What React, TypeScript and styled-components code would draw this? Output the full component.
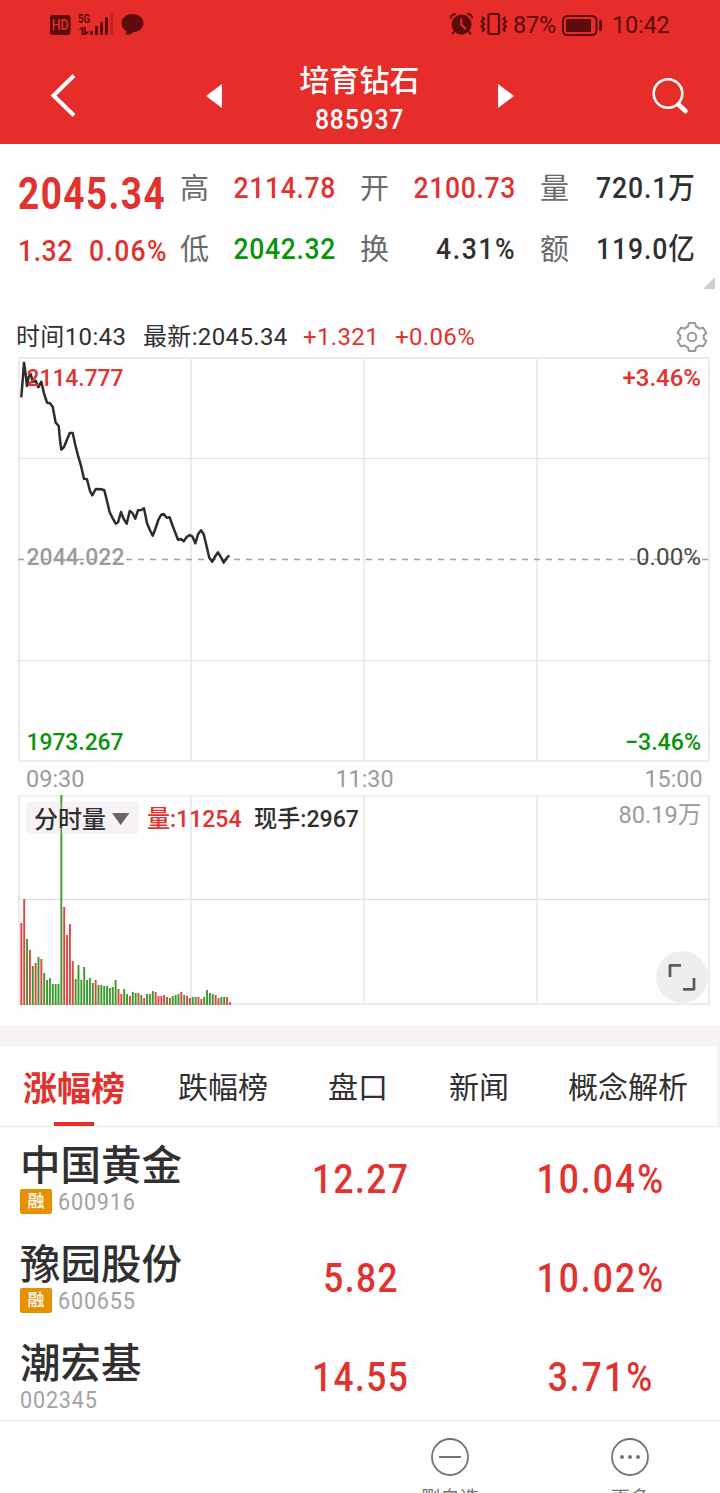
import React from "react";
import styled, { createGlobalStyle } from "styled-components";

const c = {
  brand: "#e72d2a",
  statusInk: "#5e0b0d",
  up: "#e03330",
  down: "#0a930c",
  ink: "#303030",
  label: "#6a6a6a",
  mute: "#9b9b9b",
  grid: "#ececec",
  band: "#f6f2f6",
  badge: "#e69100",
};

const GlobalStyle = createGlobalStyle`
  * { box-sizing: border-box; }
  body { margin: 0; background: #fefefe; overflow: hidden; }
`;

const Screen = styled.div`
  width: 720px;
  height: 1493px;
  overflow: hidden;
  display: flex;
  flex-direction: column;
  background: #fefefe;
  color: ${c.ink};
  font-family: Roboto, "Noto Sans CJK SC", sans-serif;
`;

/* Numerals are set slightly condensed with open tracking. */
const Num = styled.span<{
  $size: number;
  $weight?: number;
  $track?: number;
  $squeeze?: number;
  $origin?: string;
  $color?: string;
}>`
  display: inline-block;
  white-space: nowrap;
  font-size: ${(p) => p.$size}px;
  font-weight: ${(p) => p.$weight ?? 500};
  letter-spacing: ${(p) => p.$track ?? 0}px;
  color: ${(p) => p.$color ?? "inherit"};
  transform: scaleX(${(p) => p.$squeeze ?? 0.9});
  transform-origin: ${(p) => p.$origin ?? "left"} center;
  line-height: 1.2;
`;

const Header = styled.header`
  height: 144px;
  flex: none;
  background: ${c.brand};
  color: #fff;
`;

const StatusBar = styled.div`
  height: 48px;
  display: flex;
  justify-content: space-between;
  padding: 0 50px 0 49px;
  color: ${c.statusInk};
`;

const StatusGroup = styled.div`
  display: flex;
  align-items: center;
  height: 49px;
`;

const StatusText = styled.span<{ $width: number; $gap: number }>`
  width: ${(p) => p.$width}px;
  margin-left: ${(p) => p.$gap}px;
  font-size: 23.5px;
  letter-spacing: -0.2px;
  white-space: nowrap;
`;

const NavBar = styled.div`
  height: 96px;
  display: flex;
  align-items: center;
  justify-content: space-between;
  padding: 0 30px 0 50px;
`;

const BackIcon = styled.svg`
  margin-bottom: 3px;
`;

const Switcher = styled.div`
  display: flex;
  align-items: center;
  width: 308px;
  justify-content: space-between;
  margin-right: 7px;
`;

const Title = styled.div`
  display: flex;
  flex-direction: column;
  align-items: center;
  gap: 1px;
  height: 96px;
  padding-top: 12px;
`;

const TitleName = styled.h1`
  margin: 0;
  font-size: 30px;
  line-height: 42px;
  font-weight: 500;
`;

const Quote = styled.section`
  height: 176px;
  flex: none;
  display: grid;
  grid-template-columns: 162px 180px 180px 155px;
  grid-template-rows: 61px 61px;
  padding: 14px 0 0 18px;
  position: relative;
`;

const Cell = styled.div`
  display: flex;
  align-items: center;
  justify-content: space-between;
  width: 156px;
`;

const Latest = styled(Cell)<{ $shift?: number }>`
  justify-content: flex-start;
  padding-top: ${(p) => p.$shift ?? 0}px;
`;

const Change = styled.div<{ $width: number }>`
  width: ${(p) => p.$width}px;
`;

const CellLabel = styled.span`
  font-family: "Noto Sans CJK SC", sans-serif;
  font-size: 29px;
  line-height: 40px;
  margin-top: -5px;
  color: ${c.label};
`;

const Corner = styled.svg`
  position: absolute;
  right: 5px;
  top: 133px;
`;

const InfoRow = styled.div`
  height: 37px;
  flex: none;
  display: flex;
  align-items: center;
  padding: 0 0 4px 16px;
  font-size: 24px;
  line-height: 32px;
`;

const Info = styled.span<{ $width: number; $color?: string }>`
  width: ${(p) => p.$width}px;
  white-space: nowrap;
  letter-spacing: 0.35px;
  color: ${(p) => p.$color ?? c.ink};
`;

const GearSvg = styled.svg`
  margin-left: auto;
  margin-right: 12px;
`;

const ChartSvg = styled.svg`
  display: block;
  flex: none;
  font-family: Roboto, "Noto Sans CJK SC", sans-serif;
`;

const VolumeArea = styled.div`
  position: relative;
  height: 231px;
  flex: none;
`;

const ExpandButton = styled.button`
  position: absolute;
  left: 656px;
  top: 156px;
  width: 52px;
  height: 52px;
  border: 0;
  padding: 0;
  border-radius: 50%;
  background: #eeeeee;
`;

const Band = styled.div`
  height: 20px;
  flex: none;
  background: ${c.band};
`;

const Tabs = styled.nav`
  height: 81px;
  flex: none;
  display: flex;
  align-items: stretch;
  padding-left: 23px;
  border-right: 3px solid ${c.band};
  border-bottom: 1px solid #ebebeb;
`;

const Tab = styled.div<{ $active?: boolean; $width: number }>`
  width: ${(p) => p.$width}px;
  flex: none;
  position: relative;
  font-family: "Noto Sans CJK SC", sans-serif;
  font-size: ${(p) => (p.$active ? 34 : 30)}px;
  font-weight: ${(p) => (p.$active ? 700 : 400)};
  color: ${(p) => (p.$active ? c.up : c.ink)};
  line-height: ${(p) => (p.$active ? 81 : 79)}px;
  white-space: nowrap;
  &::after {
    content: "";
    display: ${(p) => (p.$active ? "block" : "none")};
    position: absolute;
    left: 31px;
    bottom: 0;
    width: 40px;
    height: 4px;
    background: ${c.brand};
  }
`;

const List = styled.div`
  height: 293px;
  flex: none;
  overflow: hidden;
`;

const Row = styled.div`
  height: 99px;
  display: grid;
  grid-template-columns: 241px 240px 239px;
`;

const Stock = styled.div`
  padding: 12px 0 0 20px;
`;

const StockName = styled.div`
  font-family: "Noto Sans CJK SC", sans-serif;
  font-size: 40.5px;
  font-weight: 500;
  line-height: 48px;
  height: 48px;
  white-space: nowrap;
`;

const StockMeta = styled.div`
  display: flex;
  align-items: center;
  gap: 6px;
  height: 26px;
  margin-top: 1px;
`;

const Badge = styled.span`
  width: 32px;
  height: 25px;
  border-radius: 2px;
  background: ${c.badge};
  color: #fff;
  font-size: 17px;
  font-weight: 500;
  line-height: 25px;
  text-align: center;
`;

const Code = styled(Num)`
  line-height: 24px;
  padding-top: 2px;
`;

const Figure = styled.div`
  display: flex;
  justify-content: center;
  align-items: center;
  height: 105px;
`;

const BottomBar = styled.footer`
  height: 73px;
  flex: none;
  display: flex;
  justify-content: flex-end;
  border-top: 1px solid #e9e9e9;
  overflow: hidden;
`;

const Action = styled.div`
  width: 180px;
  height: 90px;
  flex: none;
  display: flex;
  flex-direction: column;
  align-items: center;
  padding-top: 16px;
  color: #737373;
  font-family: "Noto Sans CJK SC", sans-serif;
  font-size: 19.5px;
  line-height: 28px;
  white-space: nowrap;
`;

const ActionIcon = styled.svg`
  flex: none;
`;

const ActionLabel = styled.span`
  flex: none;
  margin-top: 6px;
`;

const StatusIconsLeft = () => (
  <svg width="100" height="30" viewBox="49 10 100 30" fill={c.statusInk}>
    <rect x="50" y="15" width="20.500" height="20" rx="3" />
    <text x="51.700" y="30.300" fontSize="14" fontWeight="500" fill={c.brand} textLength="17" lengthAdjust="spacingAndGlyphs">HD</text>
    <text x="78" y="22.500" fontSize="13" fontWeight="700" textLength="12" lengthAdjust="spacingAndGlyphs">5G</text>
    <path d="M78 30.500 82 27h1.600v8H81.500v-5.500H78zM84.200 27h1.800v4.500h3.500L86 35h-1.800z" />
    <rect x="90" y="31" width="3" height="4" rx="1" />
    <rect x="95" y="26" width="3" height="9" rx="1" />
    <rect x="100" y="22" width="3" height="13" rx="1" />
    <rect x="105" y="17" width="3" height="18" rx="1" />
    <rect x="110.500" y="13" width="2.300" height="22" rx="1" opacity=".35" />
    <path d="M132.500 14c6.300 0 11 4 11 9s-4.500 9-10.500 9c-1 3-5 2.500-8.500 2.500 1.600-1 2-2 2-3.300-3-1.600-5-4.600-5-8.200 0-5 4.700-9 11-9z" />
  </svg>
);

const AlarmVibrate = () => (
  <svg width="60" height="30" viewBox="450 10 60 30" fill="none" stroke={c.statusInk}>
    <circle cx="462.500" cy="24.500" r="10" fill={c.statusInk} stroke="none" />
    <path d="M451.800 17.500q1-3 4.200-3.500M473.200 17.500q-1-3-4.200-3.500" strokeWidth="2.200" strokeLinecap="round" />
    <path d="m456 31-2.500 2.500M469 31l2.500 2.500" strokeWidth="2" strokeLinecap="round" />
    <path d="M462.300 18.500v6l4.500 4.500" stroke={c.brand} strokeWidth="2" />
    <rect x="489.500" y="14" width="10.500" height="20" rx="1.500" strokeWidth="2.200" />
    <path d="m483 17 2.200 2-2.700 2.500 2.700 2.500-2.700 2.500 2.700 2.500-2 2.500M506.500 17l-2.200 2 2.700 2.500-2.700 2.500 2.700 2.500-2.700 2.500 2 2.500" strokeWidth="2.200" />
  </svg>
);

const Battery = () => (
  <svg width="42" height="24" viewBox="562 12 42 24" fill="none" stroke={c.statusInk}>
    <rect x="564" y="15" width="33.500" height="19" rx="4.500" strokeWidth="2" />
    <rect x="567" y="18" width="25" height="13" rx="1" fill={c.statusInk} stroke="none" />
    <rect x="600.300" y="19" width="2.700" height="11" rx="1.300" fill={c.statusInk} stroke="none" />
  </svg>
);

const Gear = () => (
  <GearSvg width="32" height="32" viewBox="-16 -16 32 32" fill="none" stroke="#999" strokeWidth="2">
    <circle r="4.300" />
    <path
      strokeLinejoin="round"
      d="M-3-14H3L4.200-10.200Q6-9.500 7.300-8.400L11.200-9.200 14.300-4 11.600-1.500Q11.900 0 11.600 1.500L14.300 4 11.200 9.200 7.300 8.400Q6 9.500 4.200 10.200L3 14H-3L-4.200 10.200Q-6 9.500-7.300 8.400L-11.200 9.200-14.300 4-11.600 1.500Q-11.900 0-11.600-1.500L-14.300-4-11.200-9.200-7.300-8.400Q-6-9.500-4.200-10.200z"
    />
  </GearSvg>
);

/* Intraday price trace in chart coordinates. */
const price =
  "21.300,397.300 22.700,380 24,362.700 25.300,371.700 27,386 28.700,376.700 30.700,374 32.700,381.700 35.700,380.700 38.300,387.300 41.300,381.700 44,393.300 47,402.700 50,403.300 52.700,406.700 55.700,422.700 58.700,426 60,440 61.300,449.700 64,447 69.700,433 72.700,433 75.300,445 78.300,456.700 81,465.700 84,478.700 87,479.300 90,491 92.300,495.300 95.700,489 101.300,489.300 104.300,490.300 107,501 109.700,512.300 112.700,518.300 115.700,523.700 118,522.300 121,512 123.700,519 126.700,523.700 129.700,511 132.300,512.700 135.300,518.700 138,510.300 141.300,510 144,508.300 147,523.300 150,530.300 152.700,535.700 155.300,529 158.300,520 161,515 163.700,514 166.700,517.700 169.700,517.300 172.300,525 175.300,532.700 178,539.700 181,539 183.700,541.300 186.700,537 189.700,535 192.300,536.300 195.300,543.300 198,534.300 201,530.300 203.700,534.300 206.700,546.700 209.300,557.700 212.300,561.700 215,556.700 218,552.300 221,557.300 223.700,562.700 226.700,558 229.300,555.300";

/* Volume per minute: direction and bar height. */
const volume =
  "r82 r106 g66 r55 g39 r42 g48 r46 g32 g25 g27 g21 g21 g21 g211 r98 r70 r81 r44 g26 g40 g25 g38 g25 g27 g22 r25 g20 g20 g19 g19 g17 g18 g25 r16 r11 g16 g11 r9 g13 g12 r12 g10 r7 g11 g11 g14 r13 r9 r9 r10 g8 r7 g9 g10 g11 r13 g10 r9 r7 g8 g8 r8 r6 g8 g15 g12 g11 r10 r7 g8 g8 r8 r3"
    .split(" ")
    .map((v) => ({ up: v[0] === "r", h: Number(v.slice(1)) }));

type LabelProps = { x: number; y: number; w: number; fill: string; size?: number; weight?: number; children: string };
const Label = ({ x, y, w, fill, size = 24, weight = 500, children }: LabelProps) => (
  <text x={x} y={y} fontSize={size} fontWeight={weight} fill={fill} textLength={w} lengthAdjust="spacingAndGlyphs">
    {children}
  </text>
);

const PriceChart = () => (
  <ChartSvg width="720" height="438" viewBox="0 357 720 438">
    <g stroke={c.grid} strokeWidth="2">
      <path d="M18 358H710M18 761H710M19 358V761M191 358V761M364 358V761M537 358V761M709 358V761" />
      <path d="M18 458.500H710M18 660.500H710" strokeWidth="1" stroke="#e2e2e2" />
    </g>
    <path d="M18 559.500H710" stroke="#a2a2a2" strokeWidth="1.500" strokeDasharray="6 6" />
    <polyline points={price} fill="none" stroke="#2c2c2c" strokeWidth="2.500" strokeLinejoin="round" />
    <Label x={26.5} y={386} w={97} fill={c.up}>2114.777</Label>
    <Label x={622.5} y={386} w={78.5} fill={c.up}>+3.46%</Label>
    <Label x={26.5} y={565} w={98} fill={c.mute}>2044.022</Label>
    <Label x={636} y={565} w={65} fill="#4a4a4a" weight={400}>0.00%</Label>
    <Label x={26.5} y={750} w={97} fill={c.down}>1973.267</Label>
    <Label x={625} y={750} w={76} fill={c.down}>−3.46%</Label>
    <Label x={26} y={787} w={58.5} fill={c.mute} weight={400}>09:30</Label>
    <Label x={335.5} y={787} w={58} fill={c.mute} weight={400}>11:30</Label>
    <Label x={644.5} y={787} w={58} fill={c.mute} weight={400}>15:00</Label>
  </ChartSvg>
);

const VolumeChart = () => (
  <VolumeArea>
    <ChartSvg width="720" height="231" viewBox="0 795 720 231">
      <g stroke={c.grid} strokeWidth="2">
        <path d="M18 795.500H710M18 1004H710M19 795V1004M191 795V1004M364 795V1004M537 795V1004M709 795V1004" />
        <path d="M18 899.500H710" strokeWidth="1" stroke="#dcdcdc" />
      </g>
      {volume.map((v, i) => (
        <rect key={i} x={20.4 + i * 2.857} y={1005 - v.h} width="1.900" height={v.h} fill={v.up ? "#d94743" : "#3c9a2c"} />
      ))}
      <rect x="26" y="802" width="113" height="32" rx="4" fill={c.band} />
      <path d="M61.300 802V834" stroke="#3c9a2c" strokeWidth="1.800" opacity=".85" />
      <Label x={34} y={827.5} w={72} fill={c.ink}>分时量</Label>
      <path d="M112 813H129.500L120.700 825z" fill="#666" />
      <Label x={147} y={827} w={94.5} fill={c.up}>量:11254</Label>
      <Label x={254} y={827} w={105} fill={c.ink}>现手:2967</Label>
      <Label x={618.5} y={823} w={83} fill={c.mute} weight={400}>80.19万</Label>
    </ChartSvg>
    <ExpandButton aria-label="全屏">
      <svg width="52" height="52" viewBox="0 0 52 52" fill="none" stroke="#5c5c5c" strokeWidth="2.800">
        <path d="M14 26V14.300H25M27 38.300H38V27" strokeLinejoin="round" />
      </svg>
    </ExpandButton>
  </VolumeArea>
);

const stocks = [
  { name: "中国黄金", code: "600916", price: "12.27", change: "10.04%", margin: true },
  { name: "豫园股份", code: "600655", price: "5.82", change: "10.02%", margin: true },
  { name: "潮宏基", code: "002345", price: "14.55", change: "3.71%", margin: false },
];

type QuoteItem = { label: string; value: string; color: string; track?: number };

const quotes: QuoteItem[] = [
  { label: "高", value: "2114.78", color: c.up },
  { label: "开", value: "2100.73", color: c.up },
  { label: "量", value: "720.1万", color: c.ink, track: 1 },
  { label: "低", value: "2042.32", color: c.down },
  { label: "换", value: "4.31%", color: c.ink, track: 1.8 },
  { label: "额", value: "119.0亿", color: c.ink, track: 1 },
];

const QuoteCell = ({ label, value, color, track = 0.75 }: QuoteItem) => (
  <Cell>
    <CellLabel>{label}</CellLabel>
    <Num $size={29.5} $track={track} $origin="right" $color={color}>{value}</Num>
  </Cell>
);

export default function App() {
  return (
    <Screen>
      <GlobalStyle />
      <Header>
        <StatusBar>
          <StatusGroup><StatusIconsLeft /></StatusGroup>
          <StatusGroup>
            <AlarmVibrate />
            <StatusText $width={48} $gap={4}>87%</StatusText>
            <Battery />
            <StatusText $width={58} $gap={9}>10:42</StatusText>
          </StatusGroup>
        </StatusBar>
        <NavBar>
          <BackIcon width="26" height="44" viewBox="50 72 26 44" fill="none" stroke="#fff" strokeWidth="4">
            <path d="M74 74.500 53.500 94.500 74 114.500" />
          </BackIcon>
          <Switcher>
            <svg width="17" height="24" viewBox="0 0 17 24" fill="#fff"><path d="M0 12 16 0V24z" /></svg>
            <Title>
              <TitleName>培育钻石</TitleName>
              <Num $size={27.5} $track={0.9} $origin="center">885937</Num>
            </Title>
            <svg width="17" height="24" viewBox="0 0 17 24" fill="#fff"><path d="M1 0 17 12 1 24z" /></svg>
          </Switcher>
          <svg width="40" height="40" viewBox="650 76 40 40" fill="none" stroke="#fff">
            <circle cx="668" cy="93.500" r="14.300" strokeWidth="2.600" />
            <path d="m678.500 104.500 7 6.500" strokeWidth="4.500" strokeLinecap="round" />
          </svg>
        </NavBar>
      </Header>

      <Quote>
        <Latest $shift={10}>
          <Num $size={45} $weight={700} $track={1.8} $squeeze={0.82} $color={c.up}>2045.34</Num>
        </Latest>
        {quotes.slice(0, 3).map((q) => <QuoteCell key={q.label} {...q} />)}
        <Latest $shift={4}>
          <Change $width={71}><Num $size={29.5} $track={0.6} $color={c.up}>1.32</Num></Change>
          <Change $width={80}><Num $size={29.5} $track={1.5} $color={c.up}>0.06%</Num></Change>
        </Latest>
        {quotes.slice(3).map((q) => <QuoteCell key={q.label} {...q} />)}
        <Corner width="12" height="12"><path d="M12 0V12H0z" fill="#cfcfcf" /></Corner>
      </Quote>

      <InfoRow>
        <Info $width={127}>时间10:43</Info>
        <Info $width={160}>最新:2045.34</Info>
        <Info $width={92} $color={c.up}>+1.321</Info>
        <Info $width={90} $color={c.up}>+0.06%</Info>
        <Gear />
      </InfoRow>
      <PriceChart />
      <VolumeChart />
      <Band />

      <Tabs>
        <Tab $active $width={155}>涨幅榜</Tab>
        <Tab $width={150}>跌幅榜</Tab>
        <Tab $width={121}>盘口</Tab>
        <Tab $width={119}>新闻</Tab>
        <Tab $width={120}>概念解析</Tab>
      </Tabs>

      <List>
        {stocks.map((s) => (
          <Row key={s.code}>
            <Stock>
              <StockName>{s.name}</StockName>
              <StockMeta>
                {s.margin && <Badge>融</Badge>}
                <Code $size={24} $weight={400} $track={0.9} $color="#a3a3a3">{s.code}</Code>
              </StockMeta>
            </Stock>
            <Figure><Num $size={41} $track={1.7} $squeeze={0.86} $origin="center" $color={c.up}>{s.price}</Num></Figure>
            <Figure><Num $size={41} $track={2.5} $squeeze={0.86} $origin="center" $color={c.up}>{s.change}</Num></Figure>
          </Row>
        ))}
      </List>

      <BottomBar>
        <Action>
          <ActionIcon width="40" height="40" viewBox="-20 -20 40 40" fill="none" stroke="#737373" strokeWidth="1.800">
            <circle r="18" />
            <path d="M-11 0H11" strokeWidth="2" />
          </ActionIcon>
          <ActionLabel>删自选</ActionLabel>
        </Action>
        <Action>
          <ActionIcon width="40" height="40" viewBox="-20 -20 40 40" fill="#737373">
            <circle r="18" fill="none" stroke="#737373" strokeWidth="1.800" />
            <circle cx="-8" r="2" />
            <circle r="2" />
            <circle cx="8" r="2" />
          </ActionIcon>
          <ActionLabel>更多</ActionLabel>
        </Action>
      </BottomBar>
    </Screen>
  );
}
